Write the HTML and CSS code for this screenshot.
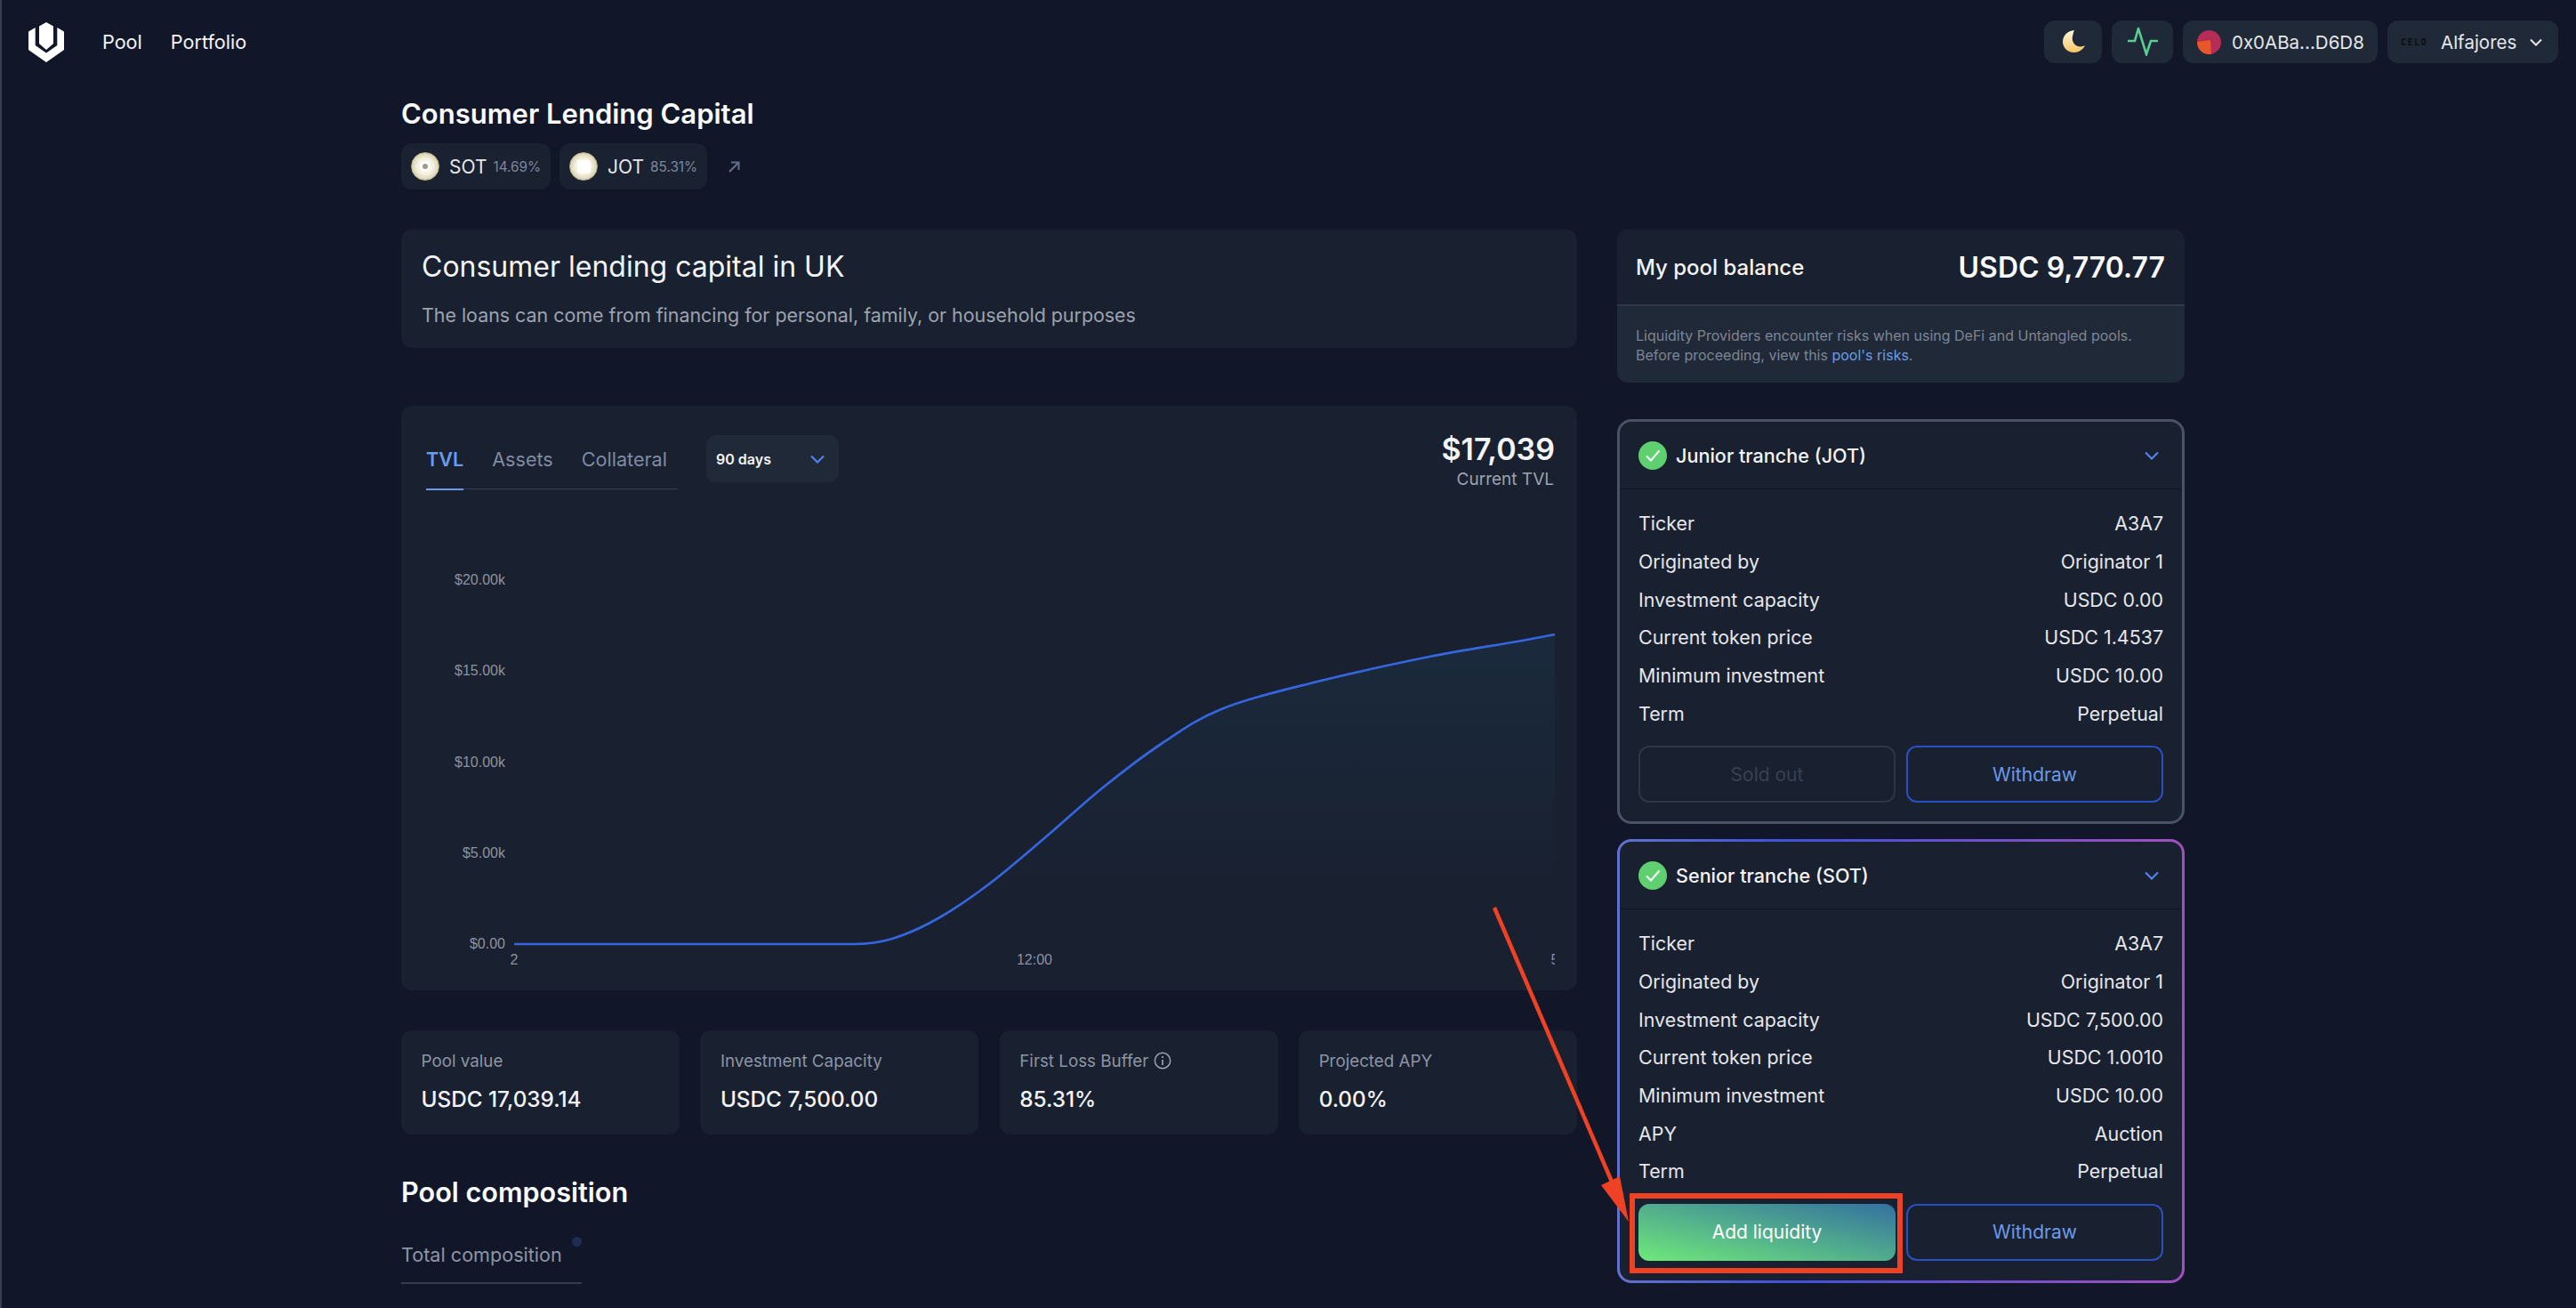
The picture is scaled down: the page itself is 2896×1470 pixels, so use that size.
FILE: index.html
```html
<!DOCTYPE html>
<html lang="en">
<head>
<meta charset="utf-8">
<title>Consumer Lending Capital</title>
<link rel="stylesheet" href="styles.css">
</head>
<body>
<div class="page">
  <header class="topbar">
    <div class="brand">
      <svg class="logo" viewBox="0 0 40 45" aria-hidden="true">
        <path fill="#fff" d="M20 0 28 4.500V24L20 31 12 24V4.500Z"/>
        <path fill="#fff" d="M0 10.500 7.700 6V26L20 34.500 32.300 26V6L40 10.500V31L20 45 0 31Z"/>
      </svg>
      <nav class="nav"><a>Pool</a><a>Portfolio</a></nav>
    </div>
    <div class="actions">
      <div class="pill pill-moon">
        <svg width="26" height="26" viewBox="0 0 26 26" aria-hidden="true">
          <defs><linearGradient id="moon" x1="0" y1="0" x2="0" y2="1"><stop offset="0" stop-color="#fff6dc"/><stop offset="1" stop-color="#f6c566"/></linearGradient></defs>
          <path fill="url(#moon)" d="M13 0C5.500.5 0 6 0 13c0 6.500 5.500 12 12.500 12C18 25 23 21.500 25 17 22 18.500 19.500 18.800 17 18 12 16.500 10 11 11 7 11.500 4.500 12 2 13 0Z"/>
        </svg>
      </div>
      <div class="pill pill-activity">
        <svg width="36" height="32" viewBox="0 0 36 32" aria-hidden="true"><path fill="none" stroke="#58cf93" stroke-width="2.600" d="M1 15H9L13 1 22 30 27 15H35"/></svg>
      </div>
      <div class="pill pill-wallet">
        <svg width="27" height="27" viewBox="0 0 27 27" aria-hidden="true"><circle cx="13.500" cy="13.500" r="13.500" fill="#b52c56"/><path fill="#e8562a" d="M0 13 15 11 16 27H13.500C6 27 0 21 0 13Z"/><path fill="#6a3fa0" d="M9 .6A13.500 13.500 0 0 1 18 .6Z"/></svg>
        <span>0x0ABa...D6D8</span>
      </div>
      <div class="pill pill-network">
        <span class="celo">CELO</span>
        <span>Alfajores</span>
        <svg width="14" height="9" viewBox="0 0 14 9" aria-hidden="true"><path fill="none" stroke="#e5e7eb" stroke-width="2" d="M1 1.500 7 7.500l6-6"/></svg>
      </div>
    </div>
  </header>

  <section class="pool-head">
    <h1 class="pool-title">Consumer Lending Capital</h1>
    <div class="chips">
      <div class="chip">
        <span class="coin"><i class="coin-dot"></i></span><span class="chip-name">SOT</span><span class="chip-pct">14.69%</span>
      </div>
      <div class="chip">
        <span class="coin"><i class="coin-square"></i></span><span class="chip-name">JOT</span><span class="chip-pct">85.31%</span>
      </div>
      <svg class="chip-link" width="13" height="13" viewBox="0 0 13 13" aria-hidden="true"><path fill="none" stroke="#64708a" stroke-width="2" d="M1 12 11.500 1.500M3 1.500H11.500V10"/></svg>
    </div>
  </section>

  <main class="columns">
    <div class="col-left">
      <section class="card desc">
        <h2 class="desc-title">Consumer lending capital in UK</h2>
        <p class="desc-text">The loans can come from financing for personal, family, or household purposes</p>
      </section>

      <section class="card chart-card">
        <div class="chart-head">
          <div class="tabs"><a class="tab tab-active">TVL</a><a class="tab">Assets</a><a class="tab">Collateral</a></div>
          <div class="range"><span>90 days</span>
            <svg width="16" height="10" viewBox="0 0 16 10" aria-hidden="true"><path fill="none" stroke="#4f82ea" stroke-width="2.200" d="M1 1.500 8 8.500l7-7"/></svg>
          </div>
          <div class="tvl"><strong>$17,039</strong><span>Current TVL</span></div>
        </div>
        <svg class="chart" width="1322" height="493" viewBox="0 0 1322 493" aria-label="TVL chart">
          <defs>
            <linearGradient id="area" gradientUnits="userSpaceOnUse" x1="0" y1="92" x2="0" y2="400"><stop offset="0" stop-color="#1a2a3c"/><stop offset="1" stop-color="#192030"/></linearGradient>
            <clipPath id="plot"><rect x="0" y="0" width="1297" height="493"/></clipPath>
          </defs>
          <path fill="url(#area)" d="M127 441H509C525 441 536.500 439.700 552 435 567.500 430.300 584.200 423 602 413 619.800 403 639 390 659 375 679 360 700.300 341.300 722 323 743.700 304.700 766.700 283 789 265 811.300 247 833.800 229.700 856 215 878.200 200.300 894.300 188.200 922 177 949.700 165.800 983 157.800 1022 148 1061 138.200 1110.300 127.200 1156 118 1201.700 108.800 1249 103 1297 93V441Z"/>
          <path fill="none" stroke="#3566de" stroke-width="2.700" d="M127 441H509C525 441 536.500 439.700 552 435 567.500 430.300 584.200 423 602 413 619.800 403 639 390 659 375 679 360 700.300 341.300 722 323 743.700 304.700 766.700 283 789 265 811.300 247 833.800 229.700 856 215 878.200 200.300 894.300 188.200 922 177 949.700 165.800 983 157.800 1022 148 1061 138.200 1110.300 127.200 1156 118 1201.700 108.800 1249 103 1297 93"/>
          <text class="axis" x="117" y="37" text-anchor="end">$20.00k</text>
          <text class="axis" x="117" y="139" text-anchor="end">$15.00k</text>
          <text class="axis" x="117" y="242" text-anchor="end">$10.00k</text>
          <text class="axis" x="117" y="344" text-anchor="end">$5.00k</text>
          <text class="axis" x="117" y="446" text-anchor="end">$0.00</text>
          <text class="axis" x="127" y="464" text-anchor="middle">2</text>
          <text class="axis" x="712" y="464" text-anchor="middle">12:00</text>
          <text class="axis" x="1297" y="464" text-anchor="middle" clip-path="url(#plot)">5</text>
        </svg>
      </section>

      <section class="stats">
        <div class="card stat"><span class="stat-label">Pool value</span><span class="stat-value">USDC 17,039.14</span></div>
        <div class="card stat"><span class="stat-label">Investment Capacity</span><span class="stat-value">USDC 7,500.00</span></div>
        <div class="card stat"><span class="stat-label">First Loss Buffer
          <svg width="20" height="20" viewBox="0 0 20 20" aria-hidden="true"><circle cx="10" cy="10" r="8.700" fill="none" stroke="#9ca3af" stroke-width="1.500"/><path stroke="#9ca3af" stroke-width="1.700" d="M10 9V15M10 5V7"/></svg></span><span class="stat-value">85.31%</span></div>
        <div class="card stat"><span class="stat-label">Projected APY</span><span class="stat-value">0.00%</span></div>
      </section>

      <h2 class="comp-title">Pool composition</h2>
      <div class="comp-tab"><span>Total composition</span><i class="comp-dot"></i></div>
    </div>

    <aside class="col-right">
      <section class="balance">
        <div class="balance-top"><span class="balance-label">My pool balance</span><strong class="balance-value">USDC 9,770.77</strong></div>
        <p class="balance-note">Liquidity Providers encounter risks when using DeFi and Untangled pools.<br>Before proceeding, view this <a>pool's risks</a>.</p>
      </section>

      <section class="tranche tranche-junior">
        <div class="tranche-head">
          <svg width="32" height="32" viewBox="0 0 32 32" aria-hidden="true"><circle cx="16" cy="16" r="16" fill="#5fd06f"/><path fill="none" stroke="#fff" stroke-width="2" d="M9 16.500 14 21.500 23.500 10.500"/></svg>
          <span class="tranche-name">Junior tranche (JOT)</span>
          <svg class="tranche-chevron" width="16" height="10" viewBox="0 0 16 10" aria-hidden="true"><path fill="none" stroke="#4f82ea" stroke-width="2.200" d="M1 1.500 8 8.500l7-7"/></svg>
        </div>
        <dl class="rows">
          <div class="row"><dt>Ticker</dt><dd>A3A7</dd></div>
          <div class="row"><dt>Originated by</dt><dd>Originator 1</dd></div>
          <div class="row"><dt>Investment capacity</dt><dd>USDC 0.00</dd></div>
          <div class="row"><dt>Current token price</dt><dd>USDC 1.4537</dd></div>
          <div class="row"><dt>Minimum investment</dt><dd>USDC 10.00</dd></div>
          <div class="row"><dt>Term</dt><dd>Perpetual</dd></div>
        </dl>
        <div class="btns"><button class="btn btn-disabled">Sold out</button><button class="btn btn-outline">Withdraw</button></div>
      </section>

      <section class="tranche tranche-senior">
        <div class="tranche-head">
          <svg width="32" height="32" viewBox="0 0 32 32" aria-hidden="true"><circle cx="16" cy="16" r="16" fill="#5fd06f"/><path fill="none" stroke="#fff" stroke-width="2" d="M9 16.500 14 21.500 23.500 10.500"/></svg>
          <span class="tranche-name">Senior tranche (SOT)</span>
          <svg class="tranche-chevron" width="16" height="10" viewBox="0 0 16 10" aria-hidden="true"><path fill="none" stroke="#4f82ea" stroke-width="2.200" d="M1 1.500 8 8.500l7-7"/></svg>
        </div>
        <dl class="rows">
          <div class="row"><dt>Ticker</dt><dd>A3A7</dd></div>
          <div class="row"><dt>Originated by</dt><dd>Originator 1</dd></div>
          <div class="row"><dt>Investment capacity</dt><dd>USDC 7,500.00</dd></div>
          <div class="row"><dt>Current token price</dt><dd>USDC 1.0010</dd></div>
          <div class="row"><dt>Minimum investment</dt><dd>USDC 10.00</dd></div>
          <div class="row"><dt>APY</dt><dd>Auction</dd></div>
          <div class="row"><dt>Term</dt><dd>Perpetual</dd></div>
        </dl>
        <div class="btns"><button class="btn btn-primary">Add liquidity</button><button class="btn btn-outline">Withdraw</button></div>
      </section>
    </aside>
  </main>

  <svg class="annotation" width="2896" height="1470" viewBox="0 0 2896 1470" aria-hidden="true">
    <rect x="1835" y="1344" width="301" height="84" fill="none" stroke="#ef4123" stroke-width="6"/>
    <path fill="none" stroke="#ef4123" stroke-width="4.500" d="M1680 1020 1812 1328"/>
    <path fill="#ef4123" d="M1831 1373 1800 1332 1821 1322Z"/>
  </svg>
</div>
</body>
</html>
```

FILE: styles.css
```css
* { box-sizing: border-box; }
html, body { margin: 0; padding: 0; background: #111729; }
body { font-family: Inter, "Liberation Sans", sans-serif; color: #f3f4f6; }
h1, h2, p, dl, dd { margin: 0; }

.page { position: relative; width: 2896px; height: 1470px; overflow: hidden; background: #111729; border-left: 2px solid #3b3f4d; }

.topbar { display: flex; justify-content: space-between; align-items: center; height: 94px; padding: 0 20px 0 30px; }
.brand { display: flex; align-items: center; gap: 43px; }
.logo { width: 40px; height: 45px; display: block; }
.nav { display: flex; gap: 32px; font-size: 21.600px; color: #f3f4f6; }
.actions { display: flex; align-items: center; gap: 11px; }
.pill { display: flex; align-items: center; height: 48px; border-radius: 12px; background: #1f2937; font-size: 20.500px; color: #e5e7eb; }
.pill-moon { width: 65px; justify-content: center; padding-left: 3px; }
.pill-activity { width: 69px; justify-content: center; }
.pill-wallet { width: 219px; padding-left: 16px; gap: 12px; }
.pill-network { width: 192px; padding-left: 15px; }
.pill-network svg { margin-left: 15px; }
.celo { width: 45px; font-size: 10px; font-family: "DejaVu Sans Mono", monospace; font-weight: 700; letter-spacing: 1.500px; color: #0b0d12; }

.pool-head { padding-left: 449px; }
.pool-title { margin-top: 13px; font-size: 31px; line-height: 42px; font-weight: 600; color: #f9fafb; }
.chips { display: flex; align-items: center; gap: 10px; margin-top: 12px; }
.chip { display: flex; align-items: center; height: 52px; padding: 0 11px; border-radius: 12px; background: #1a2130; }
.coin { display: flex; align-items: center; justify-content: center; width: 32px; height: 32px; border: 1px solid #b5ad87; border-radius: 50%; background: radial-gradient(circle, #f6f3e4 40%, #d8d1b1 72%); }
.coin-dot { width: 6px; height: 6px; border-radius: 50%; background: #9d9a86; box-shadow: 0 0 0 3px #fff; }
.coin-square { width: 15px; height: 15px; border-radius: 3px; background: #fff; }
.chip-name { margin-left: 11px; font-size: 21px; color: #e5e7eb; }
.chip-pct { margin-left: 7px; font-size: 15.300px; color: #7d879c; }
.chip-link { margin-left: 14px; }

.columns { display: grid; grid-template-columns: 1322px 638px; column-gap: 45px; margin-top: 45px; padding-left: 449px; }
.col-left, .col-right { display: flex; flex-direction: column; min-width: 0; }
.card { background: #192030; border-radius: 12px; }

.desc { height: 133px; padding: 22px 23px; }
.desc-title { font-size: 32px; line-height: 40px; font-weight: 400; color: #f3f4f6; }
.desc-text { margin-top: 20px; font-size: 21.400px; line-height: 28px; color: #9ca3af; }

.chart-card { height: 657px; margin-top: 65px; overflow: hidden; }
.chart-head { display: flex; align-items: flex-start; height: 164px; padding: 33px 25px 0 28px; }
.tabs { display: flex; gap: 32px; width: 283px; height: 61px; border-bottom: 1px solid #374151; padding-top: 14px; font-size: 21.600px; color: #7f8ba0; }
.tab { display: block; height: 46px; }
.tab-active { font-weight: 600; color: #6b9be8; box-shadow: 0 2px 0 #6b9be8; }
.range { display: flex; justify-content: space-between; align-items: center; width: 149px; height: 53px; margin-left: 32px; padding: 0 16px 0 11px; border-radius: 11px; background: #1f2937; font-size: 16px; font-weight: 600; color: #f3f4f6; }
.tvl { display: flex; flex-direction: column; align-items: flex-end; margin-left: auto; margin-top: -5px; }
.tvl strong { font-size: 34px; line-height: 42px; font-weight: 600; color: #f3f4f6; }
.tvl span { font-size: 19px; line-height: 25px; margin-right: 1px; color: #9ca3af; }
.chart { display: block; }
.axis { font-family: "Liberation Sans", sans-serif; font-size: 16px; fill: #8b93a3; }

.stats { display: grid; grid-template-columns: repeat(4, 1fr); gap: 23.500px; margin-top: 45px; }
.stat { display: flex; flex-direction: column; height: 117px; padding: 23px 22px 0 22.500px; }
.stat-label { display: flex; align-items: center; gap: 6px; height: 22px; font-size: 18.800px; color: #8d95a4; }
.stat-value { margin-top: 17px; font-size: 24.300px; line-height: 30px; font-weight: 500; color: #f3f4f6; }

.comp-title { margin-top: 45px; font-size: 30.600px; line-height: 40px; font-weight: 600; color: #f9fafb; }
.comp-tab { position: relative; width: 203px; margin-top: 36px; padding-bottom: 17px; border-bottom: 2px solid #343b4b; font-size: 21.600px; line-height: 28px; color: #8d95a4; }
.comp-dot { position: absolute; top: -6px; right: 0; width: 11px; height: 11px; border-radius: 50%; background: #1e2d55; }

.balance { height: 172px; border-radius: 12px; overflow: hidden; background: #202938; }
.balance-top { display: flex; justify-content: space-between; align-items: center; height: 86px; padding: 0 22px 0 21px; background: #192030; border-bottom: 2px solid #303848; }
.balance-label { font-size: 24px; font-weight: 500; color: #f3f4f6; }
.balance-value { font-size: 32px; font-weight: 600; color: #f9fafb; }
.balance-note { padding: 22px 21px 0; font-size: 16px; line-height: 22px; color: #7d8594; }
.balance-note a { color: #6b9be8; }

.tranche { height: 455px; margin-top: 41px; padding: 0 21px; border: 3px solid #4a5364; border-radius: 16px; background: #192030; }
.tranche-senior { height: 499px; margin-top: 17px; border-color: transparent; background: linear-gradient(#192030, #192030) padding-box, linear-gradient(90deg, #6272cc, #3f50d9 30%, #a24fbf) border-box; }
.tranche-head { display: flex; align-items: center; gap: 10px; height: 76px; margin: 0 -21px; padding: 0 21px; border-bottom: 1px solid #101624; }
.tranche-name { font-size: 21.600px; font-weight: 500; color: #f3f4f6; }
.tranche-chevron { margin-left: auto; margin-right: 5px; }
.rows { margin-top: 17px; }
.row { display: flex; justify-content: space-between; align-items: center; height: 42.700px; font-size: 21.400px; color: #e5e7eb; }
.btns { display: grid; grid-template-columns: repeat(2, 1fr); gap: 12px; margin-top: 15px; }
.btn { height: 64px; padding: 0; border-radius: 12px; background: transparent; font: 400 21px Inter, "Liberation Sans", sans-serif; }
.btn-disabled { border: 2px solid #2e3645; color: #384152; }
.btn-outline { border: 2px solid #2a4fc0; color: #6b9be8; }
.btn-primary { border: 0; color: #fff; background: linear-gradient(to top right, #6fe97a, #3370a0); }

.annotation { position: absolute; left: -2px; top: 0; pointer-events: none; }
```
